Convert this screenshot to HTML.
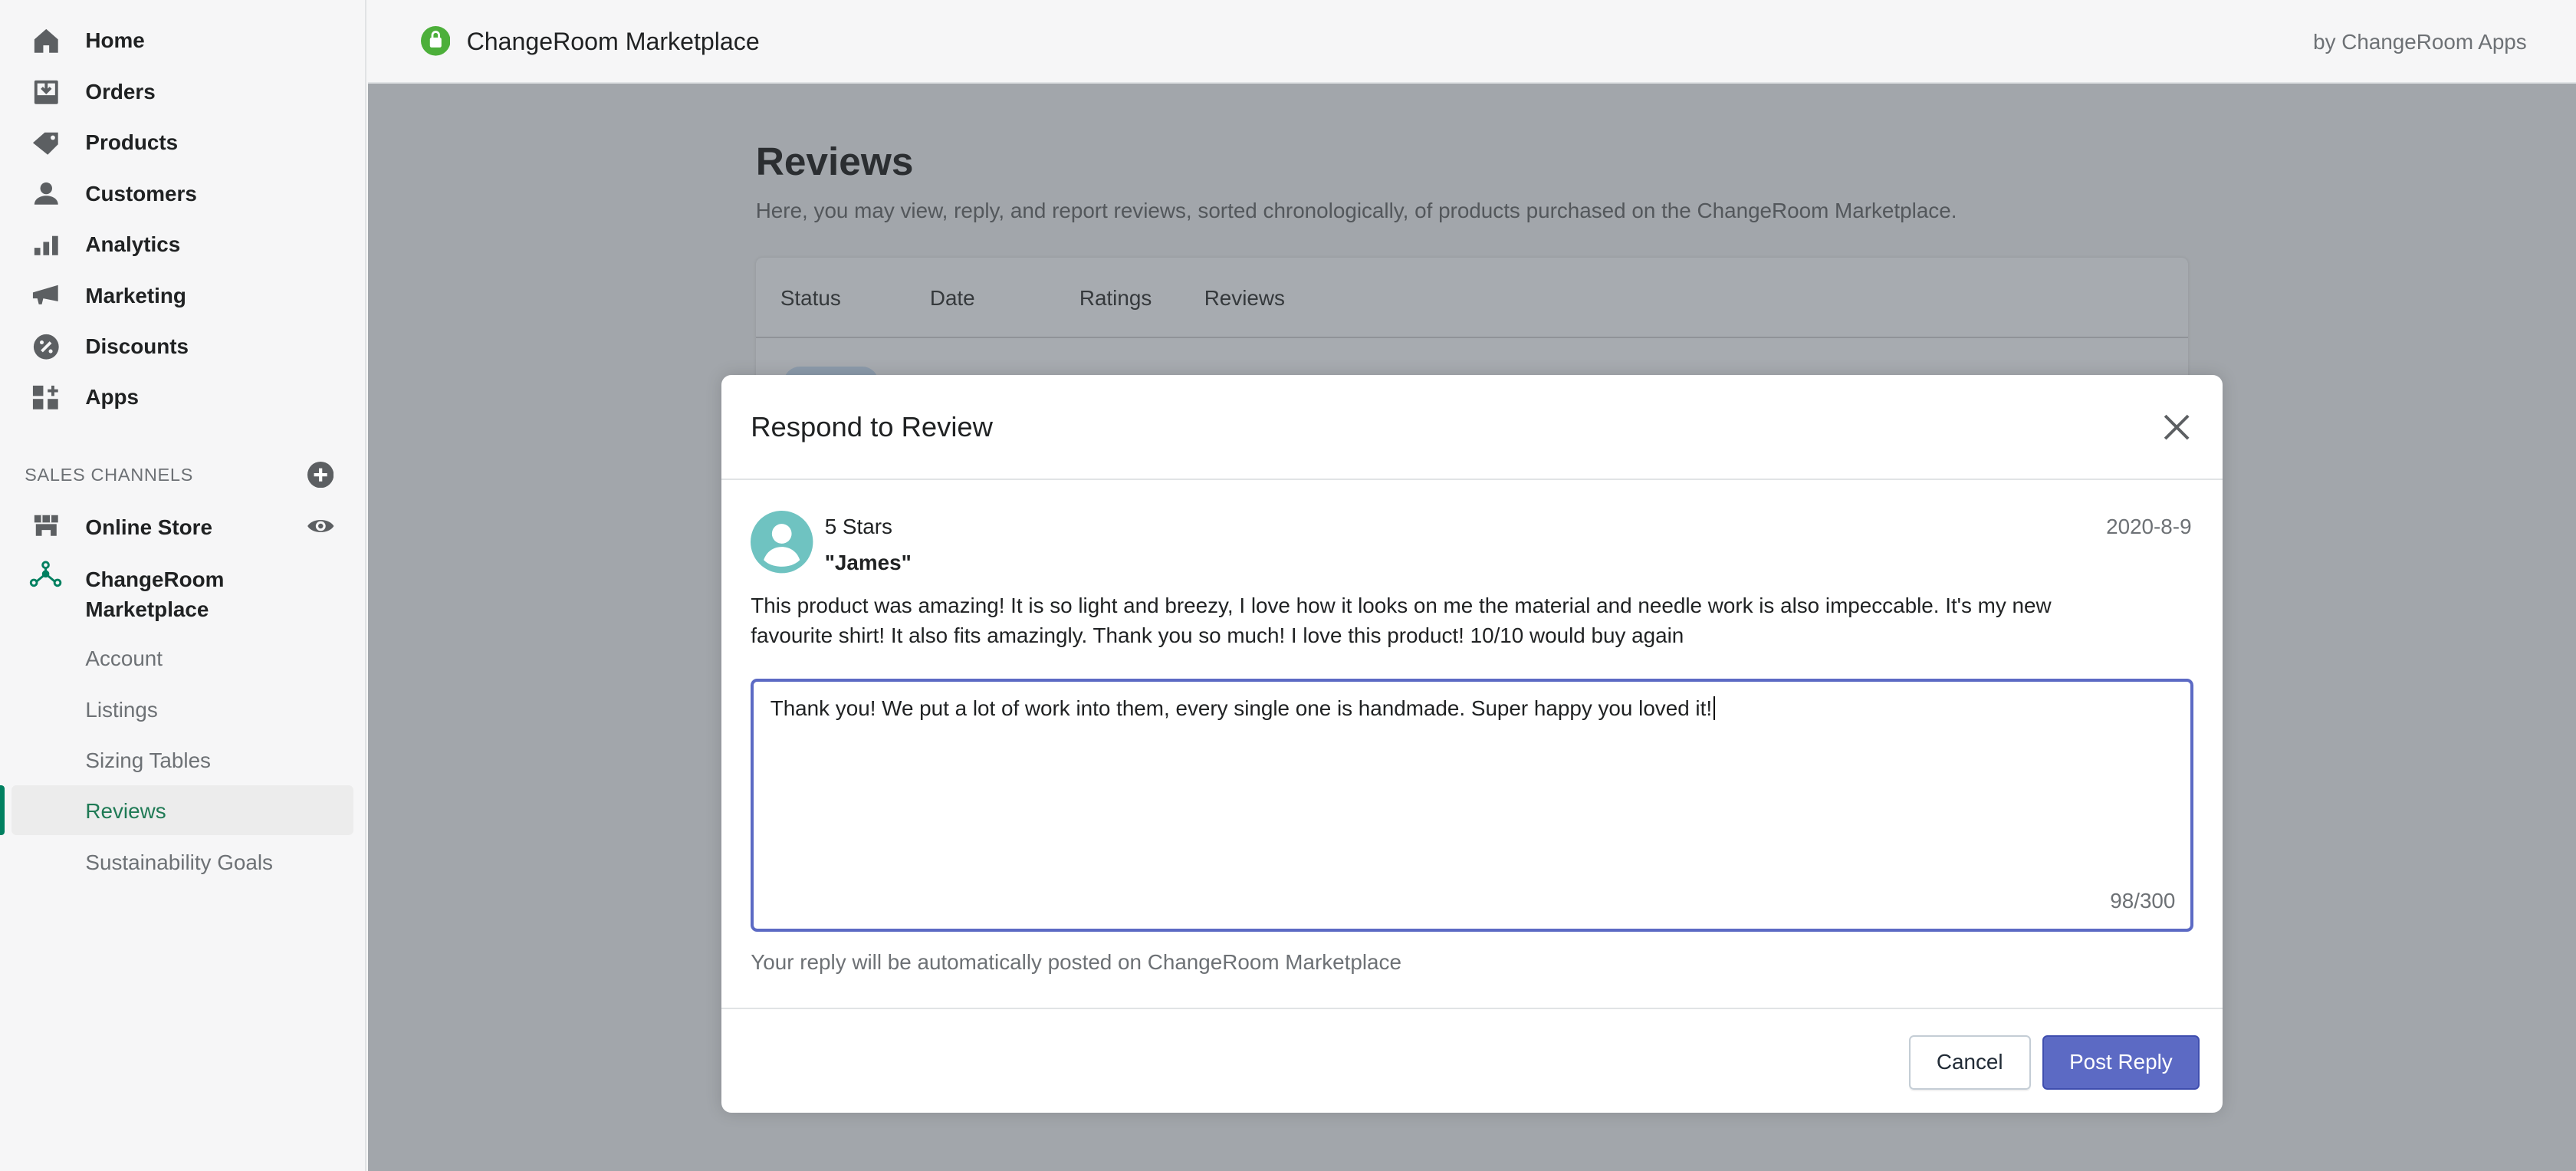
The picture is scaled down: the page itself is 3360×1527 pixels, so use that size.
<!DOCTYPE html>
<html><head><meta charset="utf-8"><style>
*{box-sizing:border-box;margin:0;padding:0}
html,body{width:3360px;height:1527px;overflow:hidden;background:#f6f6f7}
#r{zoom:2.142857;width:1568px;height:713px;position:relative;font-family:"Liberation Sans",sans-serif;color:#202223}
.abs{position:absolute}
#side{left:0;top:0;width:223px;height:713px;background:#f6f6f7;border-right:1px solid #e1e3e5}
.it{position:absolute;left:52px;font-size:13px;font-weight:bold;color:#202223;line-height:16px}
.ic{position:absolute;left:19px;width:18px;height:18px}
.sub{position:absolute;left:52px;font-size:13px;color:#6d7175;line-height:16px}
#top{left:224px;top:0;right:0;height:51px;background:#f6f6f7;border-bottom:1px solid #e1e3e5}
#ov{left:224px;top:51px;right:0;bottom:0;background:#a2a6ab}
#modal{left:439px;top:228px;width:914px;height:449px;background:#fff;border-radius:6px;box-shadow:0 0 10px rgba(0,0,0,.15)}
</style></head><body><div id="r">
<div id="side" class="abs">
<svg class="ic" style="top:16px" viewBox="0 0 20 20"><path d="M10 2 L18 9 V18 H12 V13 H8 V18 H2 V9 Z" fill="#5c5f62"/></svg>
<div class="it" style="top:17px">Home</div>
<svg class="ic" style="top:47px" viewBox="0 0 20 20"><rect x="2" y="2" width="16" height="16" rx="1" fill="#5c5f62"/><rect x="4" y="4" width="12" height="8" fill="#f6f6f7"/><path d="M10 3v7M7 7l3 3 3-3" stroke="#5c5f62" stroke-width="2" fill="none"/></svg>
<div class="it" style="top:48px">Orders</div>
<svg class="ic" style="top:78px" viewBox="0 0 20 20"><path d="M1 10 L9 3 H18 V11 L11 18 Z" fill="#5c5f62"/><circle cx="14.5" cy="6.5" r="1.5" fill="#f6f6f7"/></svg>
<div class="it" style="top:79px">Products</div>
<svg class="ic" style="top:109px" viewBox="0 0 20 20"><circle cx="10" cy="6" r="4" fill="#5c5f62"/><path d="M2 17c0-4 4-6 8-6s8 2 8 6z" fill="#5c5f62"/></svg>
<div class="it" style="top:110px">Customers</div>
<svg class="ic" style="top:140px" viewBox="0 0 20 20"><rect x="2" y="12" width="4" height="5" fill="#5c5f62"/><rect x="8" y="8" width="4" height="9" fill="#5c5f62"/><rect x="14" y="4" width="4" height="13" fill="#5c5f62"/></svg>
<div class="it" style="top:141px">Analytics</div>
<svg class="ic" style="top:171px" viewBox="0 0 20 20"><path d="M1 8 L18 3 V14 L8 12 L7 16 H5 L4 12 H1Z" fill="#5c5f62"/></svg>
<div class="it" style="top:172px">Marketing</div>
<svg class="ic" style="top:202px" viewBox="0 0 20 20"><circle cx="10" cy="10" r="8.5" fill="#5c5f62"/><path d="M7 13l6-6" stroke="#f6f6f7" stroke-width="2"/><circle cx="7" cy="7" r="1.3" fill="#f6f6f7"/><circle cx="13" cy="13" r="1.3" fill="#f6f6f7"/></svg>
<div class="it" style="top:203px">Discounts</div>
<svg class="ic" style="top:233px" viewBox="0 0 20 20"><rect x="1" y="2" width="7" height="7" fill="#5c5f62"/><rect x="1" y="11" width="7" height="7" fill="#5c5f62"/><rect x="11" y="11" width="7" height="7" fill="#5c5f62"/><path d="M14.5 2v7M11 5.5h7" stroke="#5c5f62" stroke-width="2"/></svg>
<div class="it" style="top:234px">Apps</div>
<div class="abs" style="left:15px;top:283px;font-size:11px;color:#6d7175;letter-spacing:.3px">SALES CHANNELS</div>
<svg class="abs" style="left:187px;top:281px;width:16px;height:16px" viewBox="0 0 16 16"><circle cx="8" cy="8" r="8" fill="#5c5f62"/><path d="M8 4v8M4 8h8" stroke="#fff" stroke-width="2"/></svg>
<svg class="ic" style="top:311px" viewBox="0 0 20 20"><path d="M2 3h16v5H2z" fill="#5c5f62"/><path d="M3 9h14v8h-4v-4H7v4H3z" fill="#5c5f62"/><path d="M7 3v5M13 3v5" stroke="#f6f6f7" stroke-width="1"/></svg>
<div class="it" style="top:313px">Online Store</div>
<svg class="abs" style="left:186px;top:313px;width:18px;height:14px" viewBox="0 0 18 14"><path d="M1 7C4 2 14 2 17 7 14 12 4 12 1 7Z" fill="#5c5f62"/><circle cx="9" cy="7" r="3" fill="#f6f6f7"/><circle cx="9" cy="7" r="1.5" fill="#5c5f62"/></svg>
<svg class="ic" style="top:341px;left:17px;width:22px" viewBox="0 0 22 20"><circle cx="11" cy="3" r="2" fill="none" stroke="#008060" stroke-width="1.5"/><circle cx="11" cy="9" r="2.5" fill="#008060"/><circle cx="3" cy="15" r="2" fill="none" stroke="#008060" stroke-width="1.5"/><circle cx="19" cy="15" r="2" fill="none" stroke="#008060" stroke-width="1.5"/><path d="M11 5v4M5 14l6-5 6 5" stroke="#008060" stroke-width="1.5" fill="none"/></svg>
<div class="it" style="top:344px;line-height:18px">ChangeRoom<br>Marketplace</div>
<div class="sub" style="top:393px">Account</div>
<div class="sub" style="top:424px">Listings</div>
<div class="sub" style="top:455px">Sizing Tables</div>
<div class="abs" style="left:7px;top:478px;width:208px;height:30px;background:#ececec;border-radius:3px"></div>
<div class="abs" style="left:0;top:478px;width:3px;height:30px;background:#008060;border-radius:0 2px 2px 0"></div>
<div class="sub" style="top:486px;color:#1f7a55">Reviews</div>
<div class="sub" style="top:517px">Sustainability Goals</div>
</div>
<div id="top" class="abs">
<svg class="abs" style="left:32px;top:16px;width:18px;height:18px" viewBox="0 0 18 18"><circle cx="9" cy="9" r="9" fill="#4caf3a"/><rect x="5.5" y="7" width="7" height="6" fill="#fff" rx="1"/><path d="M7 7V5.5a2 2 0 0 1 4 0V7" stroke="#fff" stroke-width="1.3" fill="none"/></svg>
<div class="abs" style="left:60px;top:17px;font-size:15px;color:#202223">ChangeRoom Marketplace</div>
<div class="abs" style="right:30px;top:18px;font-size:13px;color:#6d7175">by ChangeRoom Apps</div>
</div>
<div id="ov" class="abs">
<div class="abs" style="left:236px;top:33px;font-size:24px;font-weight:bold;color:#2b2e31">Reviews</div>
<div class="abs" style="left:236px;top:70px;font-size:13px;color:#53575b">Here, you may view, reply, and report reviews, sorted chronologically, of products purchased on the ChangeRoom Marketplace.</div>
<div class="abs" style="left:236px;top:106px;width:872px;height:200px;background:#a7abb0;border-radius:4px;box-shadow:0 0 2px rgba(0,0,0,.1)">
<div class="abs" style="left:0;top:0;width:872px;height:49px;border-bottom:1px solid #909398"></div>
<div class="abs" style="left:15px;top:17px;font-size:13px;color:#35393c">Status</div>
<div class="abs" style="left:106px;top:17px;font-size:13px;color:#35393c">Date</div>
<div class="abs" style="left:197px;top:17px;font-size:13px;color:#35393c">Ratings</div>
<div class="abs" style="left:273px;top:17px;font-size:13px;color:#35393c">Reviews</div>
<div class="abs" style="left:17px;top:66px;width:58px;height:20px;background:#8c9bab;border-radius:10px"></div>
</div>
</div>
<div id="modal" class="abs">
<div class="abs" style="left:18px;top:22px;font-size:17px;color:#202223">Respond to Review</div>
<svg class="abs" style="left:878px;top:24px;width:16px;height:16px" viewBox="0 0 16 16"><path d="M1 1l14 14M15 1L1 15" stroke="#5c5f62" stroke-width="1.8"/></svg>
<div class="abs" style="left:0;top:63px;width:914px;height:1px;background:#e1e3e5"></div>
<svg class="abs" style="left:18px;top:83px;width:38px;height:38px" viewBox="0 0 38 38"><circle cx="19" cy="19" r="19" fill="#6fc3c1"/><circle cx="19" cy="14" r="6" fill="#fff"/><path d="M8 30c2-6 7-8 11-8s9 2 11 8c-3 3-7 4-11 4s-8-1-11-4z" fill="#fff"/></svg>
<div class="abs" style="left:63px;top:85px;font-size:13px">5 Stars</div>
<div class="abs" style="left:63px;top:107px;font-size:13px;font-weight:bold">"James"</div>
<div class="abs" style="right:19px;top:85px;font-size:13px;color:#6d7175">2020-8-9</div>
<div class="abs" style="left:18px;top:132px;width:835px;font-size:13px;line-height:18px">This product was amazing! It is so light and breezy, I love how it looks on me the material and needle work is also impeccable. It's my new favourite shirt! It also fits amazingly. Thank you so much! I love this product! 10/10 would buy again</div>
<div class="abs" style="left:18px;top:185px;width:878px;height:154px;border:2px solid #5c6ac4;border-radius:4px">
<div class="abs" style="left:10px;top:9px;font-size:13px">Thank you! We put a lot of work into them, every single one is handmade. Super happy you loved it!<span style="border-left:1px solid #000;margin-left:1px"></span></div>
<div class="abs" style="right:9px;top:126px;font-size:13px;color:#6d7175">98/300</div>
</div>
<div class="abs" style="left:18px;top:350px;font-size:13px;color:#6d7175">Your reply will be automatically posted on ChangeRoom Marketplace</div>
<div class="abs" style="left:0;top:385px;width:914px;height:1px;background:#e1e3e5"></div>
<div class="abs" style="left:723px;top:402px;width:74px;height:33px;border:1px solid #c4cdd5;border-radius:3px;font-size:13px;text-align:center;line-height:31px;color:#212b36;box-shadow:0 1px 0 rgba(0,0,0,.05)">Cancel</div>
<div class="abs" style="left:804px;top:402px;width:96px;height:33px;background:#5c6ac4;border:1px solid #3f4eae;border-radius:3px;font-size:13px;text-align:center;line-height:31px;color:#fff">Post Reply</div>
</div>
</div></body></html>
